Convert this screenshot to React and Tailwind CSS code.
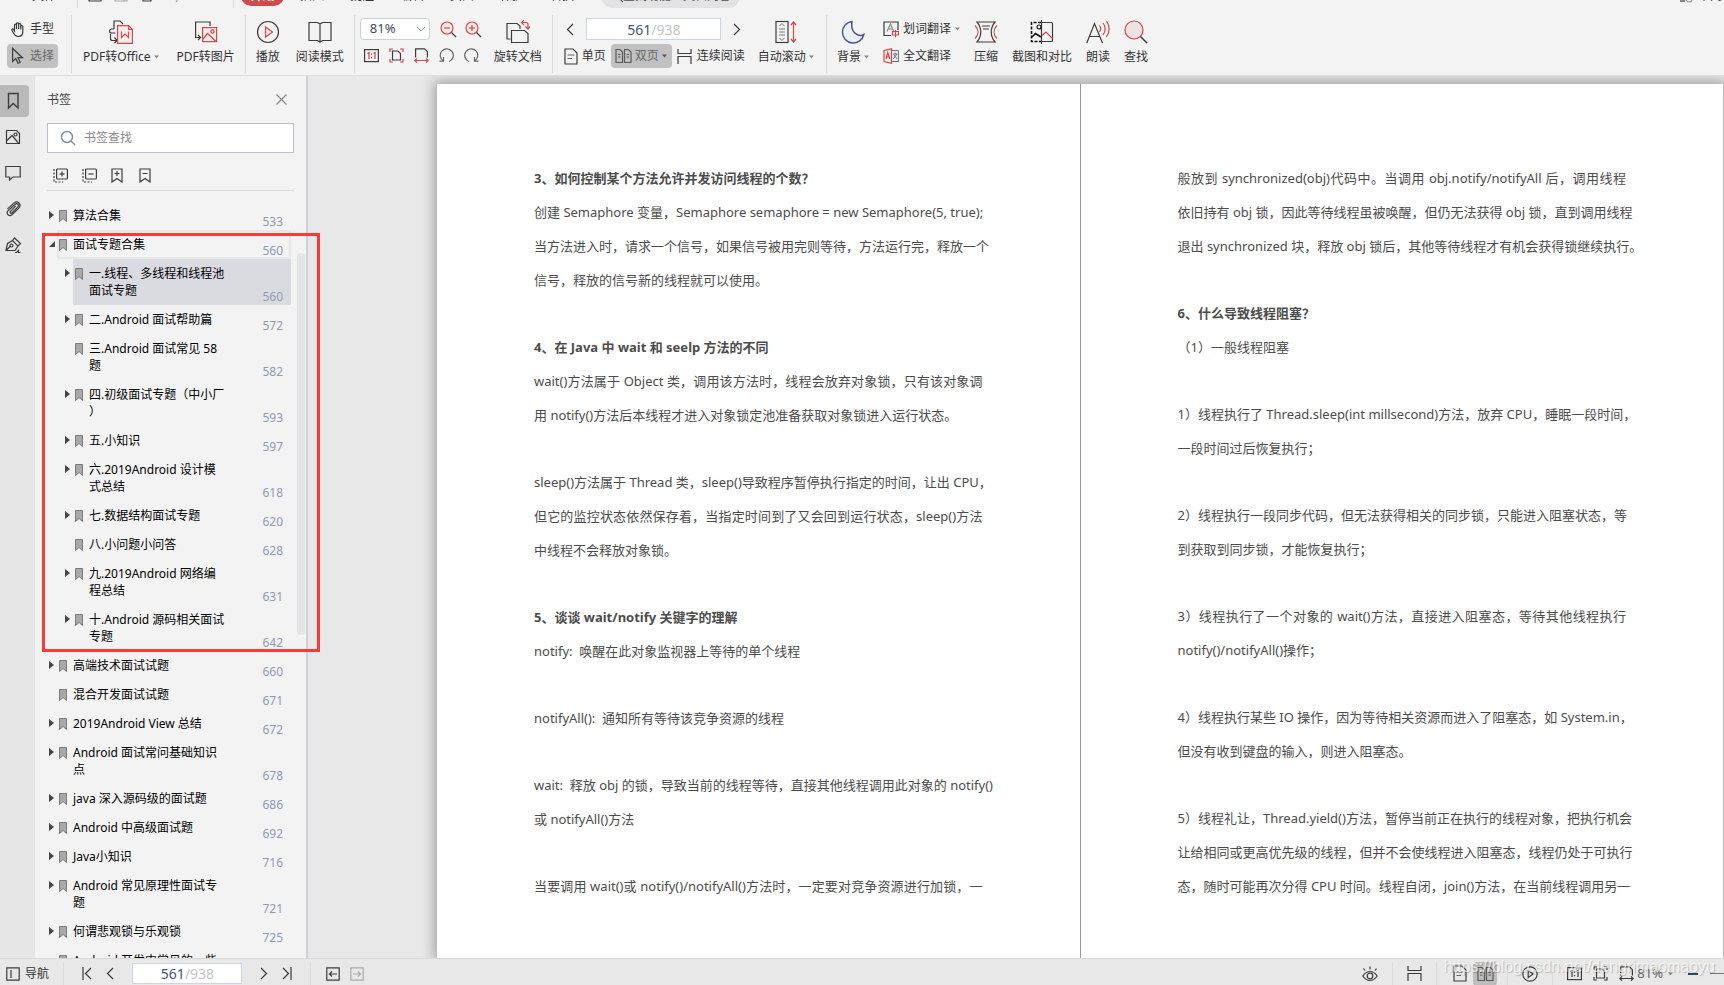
import React, { useState } from "react";

const DARK = "#3c3c3c";
const RED = "#d0494c";

const Svg = ({ w = 16, h = 16, children, color = DARK }) => (
  <svg
    width={w}
    height={h}
    viewBox={`0 0 ${w} ${h}`}
    fill="none"
    stroke={color}
    strokeWidth="1.2"
    className="shrink-0"
    aria-hidden="true"
  >
    {children}
  </svg>
);

const Caret = ({ dark }) => (
  <svg width="5" height="4" viewBox="0 0 5 4" className="shrink-0" aria-hidden="true">
    <path d="M0 0.5h5L2.5 3.5z" fill={dark ? "#555" : "#888"} />
  </svg>
);

const ChevronLeft = () => (
  <Svg w={8} h={13}>
    <path d="M7 1L1.5 6.5L7 12" />
  </Svg>
);

const ChevronRight = () => (
  <Svg w={8} h={13}>
    <path d="M1 1l5.500 5.500L1 12" />
  </Svg>
);

const HandIcon = () => (
  <Svg w={14} h={15}>
    <path d="M3.500 9V3.300c0-1.500 2-1.500 2 0V7V1.900c0-1.500 2.200-1.500 2.200 0V7V2.600c0-1.400 2.100-1.400 2.100 0V7.500V4.500c0-1.300 2-1.300 2 0V9.500c0 3-1.600 5-4.600 5c-2.400 0-3.500-1.200-4.400-3L.9 8.300c-.5-1.200.9-1.800 1.600-.8L3.500 9z" />
  </Svg>
);

const PointerIcon = () => (
  <Svg w={14} h={18}>
    <path d="M1.600 1.500v13l3.200-2.900l2.200 4.700l2.200-1l-2.200-4.600h4.500z" />
  </Svg>
);

const OfficeIcon = () => (
  <Svg w={24} h={24}>
    <path d="M5 9V1h6l3 3M5 9H2.500c-2.500 0-2.500 4 0 4h4M1.500 14v4.500c0 1.500 1 2 2 2H8M5.500 17.500L8 20.500L5.500 23" />
    <path d="M8.600 5.600h11l3.800 3.800v14H8.600z" fill="#fbecec" stroke={RED} />
    <path d="M12.500 11.500v6l3.500-3.500l3.500 3.500v-6M19.600 5.600v3.800h3.800" stroke={RED} />
  </Svg>
);

const ToImageIcon = () => (
  <Svg w={24} h={24}>
    <path d="M16 6V2H1.600v15.500h4M4 15l2.500 2.500L4 20" />
    <rect x="8.600" y="7.600" width="14" height="14" fill="#fbecec" stroke={RED} />
    <circle cx="18.500" cy="11.500" r="1.600" stroke={RED} />
    <path d="M9 19l4.500-5.500l8.500 8" stroke={RED} />
  </Svg>
);

const PlayBigIcon = () => (
  <Svg w={24} h={24}>
    <circle cx="12" cy="12" r="10.500" />
    <path d="M9.500 7v10l7-5z" stroke={RED} fill="#fbecec" />
  </Svg>
);

const BookIcon = () => (
  <Svg w={24} h={24}>
    <path d="M1 2.500h8.500L12 4l2.500-1.500H23v18h-8.500L12 22l-2.500-1.500H1zM12 4v18" />
  </Svg>
);

const ZoomIcon = ({ plus }) => (
  <Svg w={17} h={17}>
    <circle cx="7" cy="7" r="6" stroke={RED} fill="#f9eaea" />
    <path d="M4 7h6" stroke={RED} />
    {plus && <path d="M7 4v6" stroke={RED} />}
    <path d="M11.500 11.500l4.500 4.500" />
  </Svg>
);

const OneToOneIcon = ({ accent = RED }) => (
  <Svg w={15} h={14}>
    <rect x="0.600" y="0.600" width="13.800" height="12" />
    <path d="M3.500 4.500L5 3.500v6.500M9.500 4.500L11 3.500v6.500M7.500 4.500v1.200M7.500 8v1.200" stroke={accent} />
  </Svg>
);

const FitPageIcon = ({ accent = RED }) => (
  <Svg w={15} h={15}>
    <path d="M1 4V1h3M11 1h3v3M1 11v3h3M11 14h3v-3" stroke={accent} />
    <path d="M3.500 3h5.500l2.500 2.500V12h-8z" />
  </Svg>
);

const FitWidthIcon = ({ accent = RED }) => (
  <Svg w={15} h={15}>
    <path d="M1.600 9.500V.8h8.900l2.900 2.900v5.800" />
    <path d="M.8 12.500h13.400M3 10.300L.8 12.500L3 14.700M12 10.300l2.200 2.200l-2.200 2.200" stroke={accent} />
  </Svg>
);

const TurnIcon = ({ right }) => (
  <Svg w={15} h={15} color="#666">
    {right ? (
      <path d="M5 13.500A6.500 6.500 0 1 1 10.500 13M10.500 9v4.200h4" />
    ) : (
      <path d="M10 13.500A6.500 6.500 0 1 0 4.500 13M4.500 9v4.200h-4" />
    )}
  </Svg>
);

const RotateDocIcon = () => (
  <Svg w={24} h={24}>
    <path d="M4.500 19H1V3.500h10L14 6v3" />
    <path d="M5.500 10.500h13l3.500 3v9H5.500z" />
    <path d="M15.500 2.500h4.500c1.500 0 2 1 2 2v4.500M18 0l-2.500 2.500L18 5M19.500 6.500L22 9l2-2.500" stroke={RED} />
  </Svg>
);

const SinglePageIcon = () => (
  <Svg w={14} h={17}>
    <path d="M1 1h8l4 4v11H1z" />
    <path d="M3.500 7h7M3.500 10.500h4.500" stroke="#666" />
  </Svg>
);

const DoublePageIcon = () => (
  <Svg w={17} h={16} color="#5a5a5a">
    <path d="M1 1.500h4l2.500 2.500v10.500H1zM9.500 1.500h4L16 4v10.500H9.500z" />
    <path d="M3 6.500h2.500M3 9h2.500M11.500 6.500H14M11.500 9H14" />
  </Svg>
);

const ContinuousIcon = () => (
  <Svg w={15} h={15}>
    <path d="M1 0v4.500h13V0M1 15V7.500h13V15" />
  </Svg>
);

const AutoScrollIcon = () => (
  <Svg w={24} h={24}>
    <rect x="2" y="1.500" width="12" height="21" />
    <path d="M5.500 6L8 3.500L10.500 6M5 9h6M5 12h6M5 15h6M5.500 18L8 20.500L10.500 18" stroke="#777" strokeWidth="1" />
    <path d="M19.500 2.500v19M17 5l2.500-3L22 5M17 19l2.500 3l2.500-3" stroke={RED} />
  </Svg>
);

const MoonIcon = () => (
  <Svg w={24} h={24} color="#4a5a80">
    <path
      d="M11 1.500A10.800 10.800 0 1 0 22.800 14.500C18 17.500 9 13 11 1.500z"
      fill="#eceff6"
      strokeWidth="1.500"
    />
  </Svg>
);

const WordTranslateIcon = () => (
  <Svg w={16} h={17}>
    <path d="M8 14.500H1V1h14v8" />
    <path d="M4 10.500L7.500 3l3 7M5.500 8h4" stroke="#888" />
    <path d="M9.500 10.500h6v3.500h-6zM12.500 9v7.500" stroke={RED} />
  </Svg>
);

const FullTranslateIcon = () => (
  <Svg w={16} h={16}>
    <path d="M1 2.500L8.500.8v14.500L1 13.500z" stroke={RED} fill="#fbecec" />
    <path d="M3 11l1.800-6.500L6.800 11M3.600 9h2.800" stroke={RED} />
    <path d="M8.500 2.500h6.900v11H8.500M10 6h4.500M12.200 4.500V6M10.300 11L14 6M10.500 6.500l3.800 4.500" stroke="#60708f" strokeWidth="1" />
  </Svg>
);

const CompressIcon = () => (
  <Svg w={24} h={24}>
    <path d="M3 2h18c-5 6-5 14 0 20H3c5-6 5-14 0-20zM8 6h8M9 9h6" />
    <path d="M1 5.500c4 4 4 9 0 13M23 5.500c-4 4-4 9 0 13" stroke={RED} />
  </Svg>
);

const CompareIcon = () => (
  <Svg w={24} h={24}>
    <path d="M11 2.500H1.500v19H11" stroke="#111" strokeWidth="1.600" strokeDasharray="3 1.500" />
    <path d="M11.500 0v24M12 2.500h9.500c.7 0 1 .5 1 1v17c0 .6-.3 1-1 1H12" />
    <circle cx="9" cy="7" r="2" stroke="#111" />
    <path d="M2 17l3.500-3.500L11 17" stroke="#111" strokeWidth="1.600" />
    <path d="M12 15.500l4-3.500l6.500 6.500" stroke={RED} />
  </Svg>
);

const ReadAloudIcon = () => (
  <Svg w={24} h={24}>
    <path d="M.8 23L8.500 3.500L16.500 23M4 16.500h9.500" />
    <path d="M13.500 5.500c1.500 2 1.500 4.500 0 6.500M17 3c2.800 3.500 2.800 8.500 0 12M20.500 1c3.500 4.800 3.500 11.200 0 16" stroke={RED} />
  </Svg>
);

const FindIcon = () => (
  <Svg w={24} h={24}>
    <circle cx="10" cy="10" r="9" stroke={RED} fill="#f0e2e2" />
    <path d="M16.500 16.500l6.500 6.500" strokeWidth="1.500" />
  </Svg>
);

const TreeToolIcon = ({ plus }) => (
  <Svg w={15} h={15}>
    <path d="M1 1v13h9" strokeDasharray="2 1.500" />
    <rect x="3.600" y="1" width="10.800" height="10" rx="1" />
    <path d="M6.500 6h5" />
    {plus && <path d="M9 3.500v5" />}
  </Svg>
);

const MarkToolIcon = ({ plus }) => (
  <Svg w={12} h={15}>
    <path d="M1 1h10v13L6 10.500L1 14zM3.500 5.500h5" />
    {plus && <path d="M6 3v5" />}
  </Svg>
);

const RAIL = [
  {
    label: "书签",
    icon: (
      <Svg w={16} h={18}>
        <path d="M3.500 1.500h9.500v14.500L8.200 11.500L3.500 16z" strokeWidth="1.400" />
      </Svg>
    ),
  },
  {
    label: "缩略图",
    icon: (
      <Svg w={16} h={16}>
        <path d="M1.500 1.500h10l3 3v10h-13zM1.500 12L7 6.500l6.500 7.500" />
        <circle cx="10.500" cy="5.500" r="1.500" />
      </Svg>
    ),
  },
  {
    label: "批注",
    icon: (
      <Svg w={16} h={16}>
        <path d="M.8 1.500h14.400V12H8l-3.500 3v-3H.8z" />
      </Svg>
    ),
  },
  {
    label: "附件",
    icon: (
      <Svg w={16} h={16}>
        <path d="M10.800 4.800l-5.300 5.600c-.9 1-.1 2.400 1.200 1.600l6-5.800c1.900-2-.4-4.700-2.600-2.900L3 9.700c-2.300 2.600.8 6.400 4 4.100l6.800-6.600c3.300-3.500-1-8-4.700-5.300L2.500 7.900" />
      </Svg>
    ),
  },
  {
    label: "签名",
    icon: (
      <Svg w={17} h={17}>
        <path d="M1 13.500l1.500-7L7.500 3.500l5.500 5.500l-3 4.500zM7.500 3.500L9.500 1l6 5.500L13 9M1 13.500l4.500-4.500M10 15.500h1.500l2-2v2h2" />
        <circle cx="6.500" cy="8.500" r="1.500" />
      </Svg>
    ),
  },
];

const BOOKMARKS = [
  { lines: ["算法合集"], page: 533, level: 0, arrow: true },
  { lines: ["面试专题合集"], page: 560, level: 0, arrow: true, open: true },
  { lines: ["一.线程、多线程和线程池", "面试专题"], page: 560, level: 1, arrow: true, active: true },
  { lines: ["二.Android 面试帮助篇"], page: 572, level: 1, arrow: true },
  { lines: ["三.Android 面试常见 58", "题"], page: 582, level: 1 },
  { lines: ["四.初级面试专题（中小厂", "）"], page: 593, level: 1, arrow: true },
  { lines: ["五.小知识"], page: 597, level: 1, arrow: true },
  { lines: ["六.2019Android 设计模", "式总结"], page: 618, level: 1, arrow: true },
  { lines: ["七.数据结构面试专题"], page: 620, level: 1, arrow: true },
  { lines: ["八.小问题小问答"], page: 628, level: 1 },
  { lines: ["九.2019Android 网络编", "程总结"], page: 631, level: 1, arrow: true },
  { lines: ["十.Android 源码相关面试", "专题"], page: 642, level: 1, arrow: true },
  { lines: ["高端技术面试试题"], page: 660, level: 0, arrow: true },
  { lines: ["混合开发面试试题"], page: 671, level: 0 },
  { lines: ["2019Android View 总结"], page: 672, level: 0, arrow: true },
  { lines: ["Android 面试常问基础知识", "点"], page: 678, level: 0, arrow: true },
  { lines: ["java 深入源码级的面试题"], page: 686, level: 0, arrow: true },
  { lines: ["Android 中高级面试题"], page: 692, level: 0, arrow: true },
  { lines: ["Java小知识"], page: 716, level: 0, arrow: true },
  { lines: ["Android 常见原理性面试专", "题"], page: 721, level: 0, arrow: true },
  { lines: ["何谓悲观锁与乐观锁"], page: 725, level: 0, arrow: true },
  { lines: ["Android 开发中常见的一些", "问题"], page: 730, level: 0 },
];

// full: the line reaches the right margin
const LEFT_PAGE = [
  [
    { text: "3、如何控制某个方法允许并发访问线程的个数？", bold: true },
    { text: "创建 Semaphore 变量，Semaphore semaphore = new Semaphore(5, true);", full: true },
    { text: "当方法进入时，请求一个信号，如果信号被用完则等待，方法运行完，释放一个", full: true },
    { text: "信号，释放的信号新的线程就可以使用。" },
  ],
  [
    { text: "4、在 Java 中 wait 和 seelp 方法的不同", bold: true },
    { text: "wait()方法属于 Object 类，调用该方法时，线程会放弃对象锁，只有该对象调", full: true },
    { text: "用 notify()方法后本线程才进入对象锁定池准备获取对象锁进入运行状态。" },
  ],
  [
    { text: "sleep()方法属于 Thread 类，sleep()导致程序暂停执行指定的时间，让出 CPU，", full: true },
    { text: "但它的监控状态依然保存着，当指定时间到了又会回到运行状态，sleep()方法", full: true },
    { text: "中线程不会释放对象锁。" },
  ],
  [
    { text: "5、谈谈 wait/notify 关键字的理解", bold: true },
    { text: "notify:  唤醒在此对象监视器上等待的单个线程" },
  ],
  [{ text: "notifyAll():  通知所有等待该竞争资源的线程" }],
  [
    { text: "wait:  释放 obj 的锁，导致当前的线程等待，直接其他线程调用此对象的 notify()", full: true },
    { text: "或 notifyAll()方法" },
  ],
  [{ text: "当要调用 wait()或 notify()/notifyAll()方法时，一定要对竞争资源进行加锁，一", full: true }],
];

const RIGHT_PAGE = [
  [
    { text: "般放到 synchronized(obj)代码中。当调用 obj.notify/notifyAll 后，调用线程", full: true },
    { text: "依旧持有 obj 锁，因此等待线程虽被唤醒，但仍无法获得 obj 锁，直到调用线程", full: true },
    { text: "退出 synchronized 块，释放 obj 锁后，其他等待线程才有机会获得锁继续执行。", full: true },
  ],
  [
    { text: "6、什么导致线程阻塞？", bold: true },
    { text: "（1）一般线程阻塞" },
  ],
  [
    { text: "1）线程执行了 Thread.sleep(int millsecond)方法，放弃 CPU，睡眠一段时间，", full: true },
    { text: "一段时间过后恢复执行；" },
  ],
  [
    { text: "2）线程执行一段同步代码，但无法获得相关的同步锁，只能进入阻塞状态，等", full: true },
    { text: "到获取到同步锁，才能恢复执行；" },
  ],
  [
    { text: "3）线程执行了一个对象的 wait()方法，直接进入阻塞态，等待其他线程执行", full: true },
    { text: "notify()/notifyAll()操作；" },
  ],
  [
    { text: "4）线程执行某些 IO 操作，因为等待相关资源而进入了阻塞态，如 System.in，", full: true },
    { text: "但没有收到键盘的输入，则进入阻塞态。" },
  ],
  [
    { text: "5）线程礼让，Thread.yield()方法，暂停当前正在执行的线程对象，把执行机会", full: true },
    { text: "让给相同或更高优先级的线程，但并不会使线程进入阻塞态，线程仍处于可执行", full: true },
    { text: "态，随时可能再次分得 CPU 时间。线程自闭，join()方法，在当前线程调用另一", full: true },
  ],
];

const Divider = () => <div className="w-px self-stretch bg-[#dcdcdc]" />;

const BigButton = ({ icon, label, caret }) => (
  <button className="flex flex-col items-center gap-1 pt-[5px]">
    {icon}
    <span className="flex items-center gap-[3px] leading-[18px]">
      {label}
      {caret && <Caret />}
    </span>
  </button>
);

const PageBox = ({ id, className, page, setPage }) => (
  <label
    htmlFor={id}
    className={`flex items-center justify-center border border-[#ccd5e6] bg-white text-[14px] ${className}`}
  >
    <input
      id={id}
      aria-label="页码"
      value={page}
      onChange={(e) => setPage(e.target.value)}
      className="w-[25px] bg-transparent text-right text-[#3f5478] outline-none"
    />
    <span className="text-[#c4c4c4]">/938</span>
  </label>
);

const TopTabs = () => (
  <div className="flex h-2 items-end overflow-hidden leading-6">
    <span className="w-[77px] pl-8">文件</span>
    <div className="h-full w-px bg-[#dcdcdc]" />
    <div className="flex w-[155px] gap-3 pb-[6px] pl-[10px]">
      <Svg w={14} h={14}>
        <path d="M1 3h12v10H1z" />
      </Svg>
      <Svg w={14} h={14} color="#aaa">
        <path d="M1 1h12v12H1zM4 8h6v5" />
      </Svg>
      <Svg w={14} h={14}>
        <path d="M3 1h8v12H3z" />
      </Svg>
      <Svg w={14} h={14} color="#aaa">
        <path d="M3 6h7c3 0 3 5 0 8" />
      </Svg>
    </div>
    <div className="h-full w-px bg-[#dcdcdc]" />
    <button className="mb-[2px] ml-[7px] w-[43px] rounded-full bg-[#d0494c] font-bold leading-5 text-white">开始</button>
    <div className="ml-4 flex gap-[26px]">
      <button>插入</button>
      <button>批注</button>
      <button>编辑</button>
      <button>页面</button>
      <button>保护</button>
      <button>转换</button>
    </div>
    <button className="ml-[27px] flex w-[139px] items-center rounded-full bg-[#e3e3e5] pl-[10px] text-[#555]">
      <Svg w={12} h={14} color="#555">
        <circle cx="5" cy="5" r="4" />
        <path d="M8 9l4 4" />
      </Svg>
      查找功能、文档内容
    </button>
    <div className="ml-auto flex items-center gap-[5px] pr-[2px]">
      <Svg w={14} h={14} color="#8a97b5">
        <circle cx="10" cy="10" r="3" />
        <path d="M1 12h5" stroke={DARK} />
      </Svg>
      未同
    </div>
  </div>
);

const Toolbar = ({ page, setPage }) => (
  <div className="flex h-[58px]">
    <div className="flex flex-col gap-[3px] pl-[7px] pr-[13px] pt-[2px]">
      <button className="flex h-6 items-center gap-[5px] px-1">
        <HandIcon />
        手型
      </button>
      <button className="flex h-6 items-center gap-[5px] rounded bg-[#c1c1c1] px-1 text-[#666]">
        <PointerIcon />
        选择
      </button>
    </div>
    <Divider />
    <div className="flex gap-[18px] pl-[11px] pr-[10px]">
      <BigButton icon={<OfficeIcon />} label="PDF转Office" caret />
      <BigButton icon={<ToImageIcon />} label="PDF转图片" />
    </div>
    <Divider />
    <div className="flex gap-4 px-[10px]">
      <BigButton icon={<PlayBigIcon />} label="播放" />
      <BigButton icon={<BookIcon />} label="阅读模式" />
    </div>
    <Divider />
    <div className="flex gap-3 pl-[5px] pr-[10px]">
      <div className="flex flex-col gap-2 pt-[3px]">
        <div className="flex items-center gap-2">
          <div className="relative mr-[2px]">
            <select
              aria-label="缩放"
              defaultValue="81%"
              className="h-[22px] w-[70px] appearance-none rounded-sm border border-[#ccd0d8] bg-white pl-[9px] text-[13px] text-[#3f4a60]"
            >
              <option>81%</option>
              <option>100%</option>
            </select>
            <svg width="10" height="6" viewBox="0 0 10 6" className="pointer-events-none absolute right-1 top-2" aria-hidden="true">
              <path d="M1 1l4 4l4-4" fill="none" stroke="#8a93a5" />
            </svg>
          </div>
          <button aria-label="缩小">
            <ZoomIcon />
          </button>
          <button aria-label="放大">
            <ZoomIcon plus />
          </button>
        </div>
        <div className="flex gap-[10px] pl-1">
          <button aria-label="实际大小">
            <OneToOneIcon />
          </button>
          <button aria-label="适合页面">
            <FitPageIcon />
          </button>
          <button aria-label="适合宽度">
            <FitWidthIcon />
          </button>
          <button aria-label="向左旋转">
            <TurnIcon />
          </button>
          <button aria-label="向右旋转">
            <TurnIcon right />
          </button>
        </div>
      </div>
      <BigButton icon={<RotateDocIcon />} label="旋转文档" />
    </div>
    <Divider />
    <div className="flex gap-[13px] pl-[11px] pr-3">
      <div className="flex flex-col gap-1 pt-[3px]">
        <div className="flex h-[22px] items-center gap-3 pl-[2px]">
          <button aria-label="上一页">
            <ChevronLeft />
          </button>
          <PageBox id="toolbar-page" className="h-[22px] w-[135px]" page={page} setPage={setPage} />
          <button aria-label="下一页">
            <ChevronRight />
          </button>
        </div>
        <div className="flex h-6 items-center gap-[5px]">
          <button className="flex items-center gap-1">
            <SinglePageIcon />
            单页
          </button>
          <button className="flex h-6 w-[61px] items-center gap-[3px] rounded bg-[#c1c1c1] pl-1 text-[#666]">
            <DoublePageIcon />
            双页
            <Caret dark />
          </button>
          <button className="flex items-center gap-[5px]">
            <ContinuousIcon />
            连续阅读
          </button>
        </div>
      </div>
      <BigButton icon={<AutoScrollIcon />} label="自动滚动" caret />
    </div>
    <Divider />
    <div className="flex gap-[14px] pl-[10px]">
      <BigButton icon={<MoonIcon />} label="背景" caret />
      <div className="flex flex-col gap-[3px] pt-[2px]">
        <button className="flex h-6 items-center gap-1">
          <WordTranslateIcon />
          划词翻译
          <Caret />
        </button>
        <button className="flex h-6 items-center gap-1">
          <FullTranslateIcon />
          全文翻译
        </button>
      </div>
      <BigButton icon={<CompressIcon />} label="压缩" />
      <BigButton icon={<CompareIcon />} label="截图和对比" />
      <BigButton icon={<ReadAloudIcon />} label="朗读" />
      <BigButton icon={<FindIcon />} label="查找" />
    </div>
  </div>
);

const BookmarkRow = ({ item }) => (
  <li className={item.level ? "pl-4" : ""}>
    <a href="#" className="flex">
      <span className="w-2 shrink-0 pt-[10px]">
        {item.arrow && (
          <svg width="6" height="8" viewBox="0 0 6 8" aria-hidden="true">
            <path d={item.open ? "M6 1v6H0z" : "M0 0l5 4l-5 4z"} fill="#444" />
          </svg>
        )}
      </span>
      <span
        className={`flex flex-1 gap-[6px] py-[6px] ${item.open ? "outline-2 -outline-offset-2 outline-[#e7e7e7]" : ""} ${
          item.active ? "bg-[#dadbe0]" : ""
        }`}
      >
        <svg width="8" height="12" viewBox="0 0 8 12" className="ml-[2px] mt-[3px] shrink-0" aria-hidden="true">
          <path d="M.5.5h7v11L4 8.500L.5 11.500z" fill="#a9a9a9" stroke="#7c7c7c" />
        </svg>
        <span className="flex-1 whitespace-nowrap leading-[17px] text-black">
          {item.lines.map((line) => (
            <span key={line} className="block">
              {line}
            </span>
          ))}
        </span>
        <span className="-mb-[7px] mr-2 self-end leading-[18px] text-[#8f9bb8]">{item.page}</span>
      </span>
    </a>
  </li>
);

const BookmarkPanel = () => (
  <aside className="relative flex w-[273px] shrink-0 flex-col border-r-2 border-[#d0d1d8] bg-[#f3f3f3]">
    <div className="flex flex-col px-3">
      <div className="flex h-[47px] items-center justify-between pr-[7px] text-[#444]">
        书签
        <button aria-label="关闭">
          <Svg w={11} h={11} color="#888">
            <path d="M.5.500l10 10M10.500.500l-10 10" />
          </Svg>
        </button>
      </div>
      <label htmlFor="bookmark-search" className="flex h-[30px] items-center gap-2 border border-[#bcc1cb] bg-white pl-3">
        <Svg w={16} h={16} color="#8490a8">
          <circle cx="7" cy="7" r="5.500" strokeWidth="1.500" />
          <path d="M11 11l4 4" strokeWidth="1.500" />
        </Svg>
        <input
          id="bookmark-search"
          aria-label="书签查找"
          placeholder="书签查找"
          className="flex-1 bg-transparent outline-none placeholder:text-[#8a8a8a]"
        />
      </label>
      <div className="flex h-[38px] items-center gap-[14px] border-b border-[#dadce2] pl-[6px] pt-2">
        <button aria-label="展开全部">
          <TreeToolIcon plus />
        </button>
        <button aria-label="折叠全部">
          <TreeToolIcon />
        </button>
        <button aria-label="添加书签">
          <MarkToolIcon plus />
        </button>
        <button aria-label="删除书签" className="ml-[2px]">
          <MarkToolIcon />
        </button>
      </div>
    </div>
    <ul className="mt-[10px] min-h-0 flex-1 overflow-hidden pl-[14px] pr-[15px]">
      {BOOKMARKS.map((item) => (
        <BookmarkRow key={item.lines[0]} item={item} />
      ))}
    </ul>
    <div className="absolute right-px top-[177px] h-[382px] w-2 rounded-full bg-[#e3e4e6]" />
    {/* highlight box round the open chapter */}
    <div className="pointer-events-none absolute left-[7px] top-[157px] z-10 h-[419px] w-[278px] border-3 border-[#fb3a38]" />
  </aside>
);

const Page = ({ blocks }) => (
  <article className="flex flex-col gap-[33px] overflow-hidden whitespace-pre bg-white px-[97px] pt-[77px] text-[13px] leading-[34px] text-[#4c4c4c]">
    {blocks.map((lines) => (
      <div key={lines[0].text}>
        {lines.map((line) => (
          <p
            key={line.text}
            className={`${line.bold ? "font-bold" : ""} ${line.full ? "[text-align-last:justify]" : ""}`}
          >
            {line.text}
          </p>
        ))}
      </div>
    ))}
  </article>
);

const StatusBar = ({ page, setPage }) => (
  <footer className="relative flex h-[27px] shrink-0 items-center border-t border-[#d8d8d8] bg-[#e8e8e8] pt-[3px]">
    <button className="flex w-[63px] items-center gap-[5px] pl-[6px]">
      <Svg w={14} h={14}>
        <path d="M.8.800h12.400v12.400H.8zM5 3v8" />
      </Svg>
      导航
    </button>
    <Divider />
    <div className="flex w-[246px] items-center pl-[18px]">
      <button aria-label="首页">
        <Svg w={10} h={13}>
          <path d="M1 0v13M9 1L3.500 6.500L9 12" />
        </Svg>
      </button>
      <button aria-label="上一页" className="ml-[14px]">
        <ChevronLeft />
      </button>
      <PageBox id="status-page" className="ml-[18px] h-[21px] w-[110px]" page={page} setPage={setPage} />
      <button aria-label="下一页" className="ml-[18px]">
        <ChevronRight />
      </button>
      <button aria-label="末页" className="ml-[14px]">
        <Svg w={10} h={13}>
          <path d="M9 0v13M1 1l5.500 5.500L1 12" />
        </Svg>
      </button>
    </div>
    <Divider />
    <div className="flex gap-[10px] pl-[15px]">
      <button aria-label="后退">
        <Svg w={14} h={14}>
          <path d="M.8.800h12.400v12.400H.8zM11 7H3.500M6 4.500L3.500 7L6 9.500" />
        </Svg>
      </button>
      <button aria-label="前进">
        <Svg w={14} h={14} color="#aaa">
          <path d="M.8.800h12.400v12.400H.8zM3 7h7.500M8 4.500L10.500 7L8 9.500" />
        </Svg>
      </button>
    </div>

    <div className="ml-auto flex items-center self-stretch">
      <button aria-label="护眼模式" className="mr-[14px]">
        <Svg w={16} h={16}>
          <path d="M.8 10c4-6 10.500-6 14.400 0c-4 6-10.500 6-14.400 0zM8 3.500V.5M3 4.500L1.500 2.500M13 4.500l1.500-2" />
          <circle cx="8" cy="10" r="2.800" />
        </Svg>
      </button>
      <Divider />
      <button aria-label="连续阅读" className="px-[14px]">
        <ContinuousIcon />
      </button>
      <Divider />
      <button aria-label="单页" className="pl-4 pr-[6px]">
        <SinglePageIcon />
      </button>
      <button aria-label="双页" className="mr-[10px] flex h-6 w-6 items-center justify-center rounded bg-[#bdbdbd]">
        <DoublePageIcon />
      </button>
      <Divider />
      <button aria-label="播放" className="px-[14px]">
        <Svg w={16} h={16}>
          <circle cx="8" cy="8" r="7.200" />
          <path d="M6.200 4.500v7l4.800-3.500z" />
        </Svg>
      </button>
      <Divider />
      <div className="flex items-center gap-[11px] pl-[14px]">
        <button aria-label="实际大小">
          <OneToOneIcon accent={DARK} />
        </button>
        <button aria-label="适合页面">
          <FitPageIcon accent={DARK} />
        </button>
        <button aria-label="适合宽度">
          <FitWidthIcon accent={DARK} />
        </button>
      </div>
      <button className="ml-[3px] flex items-center gap-[5px] text-[13px] text-[#666]">
        81%
        <Caret />
      </button>
      <button aria-label="缩小" className="ml-[15px] h-[2px] w-[10px] bg-[#2f4468]" />
      <input
        type="range"
        aria-label="缩放比例"
        className="ml-3 h-px w-[14px] appearance-none bg-[#777] [&::-webkit-slider-thumb]:appearance-none"
      />
    </div>

    <div className="pointer-events-none absolute -top-px right-[9px] font-['Liberation_Sans'] text-[16px] leading-[18px] text-white/70 [text-shadow:1px_1px_1px_rgba(0,0,0,0.2)]">
      https://blog.csdn.net/dengrimaomaoyu
    </div>
  </footer>
);

export default function App() {
  const [page, setPage] = useState("561");

  return (
    <div className="flex h-screen flex-col overflow-hidden bg-[#e8e8e8] font-['Noto_Sans','Noto_Sans_CJK_SC',sans-serif] text-[12px] text-[#333]">
      <header className="z-10 flex h-[76px] shrink-0 flex-col justify-between border-b border-[#dedede] bg-[#f3f3f3] pb-[2px]">
        <TopTabs />
        <Toolbar page={page} setPage={setPage} />
      </header>

      <main className="flex min-h-0 flex-1">
        <nav className="flex w-[35px] shrink-0 flex-col gap-1 bg-[#e6e6e6] pt-[9px]">
          {RAIL.map((item, i) => (
            <button
              key={item.label}
              aria-label={item.label}
              className={`flex h-8 w-[29px] items-center pl-[5px] ${i === 0 ? "rounded-r bg-[#bababa]" : ""}`}
            >
              {item.icon}
            </button>
          ))}
        </nav>
        <BookmarkPanel />
        <section className="flex min-w-0 flex-1 overflow-hidden pl-[129px] pr-px pt-2">
          <div className="grid flex-1 grid-cols-2 gap-px bg-[#9a9a9a] shadow-[0_0_12px_3px_rgba(0,0,0,0.3)]">
            <Page blocks={LEFT_PAGE} />
            <Page blocks={RIGHT_PAGE} />
          </div>
        </section>
      </main>

      <StatusBar page={page} setPage={setPage} />
    </div>
  );
}
